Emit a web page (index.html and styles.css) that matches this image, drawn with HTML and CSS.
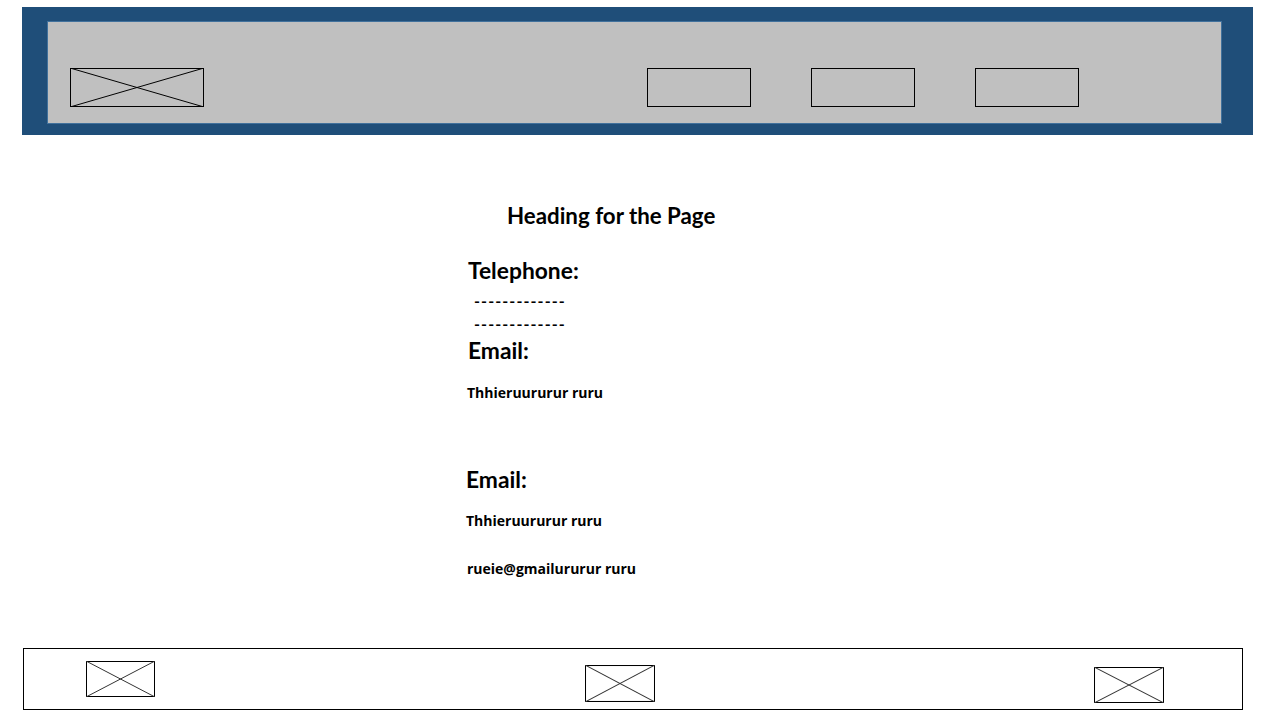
FILE: index.html
```html
<!DOCTYPE html>
<html lang="en">
<head>
<meta charset="utf-8">
<title>Contact</title>
<link rel="stylesheet" href="styles.css">
</head>
<body>
<header class="header">
  <div class="header-inner">
    <svg class="ph logo" viewBox="0 0 134 39" preserveAspectRatio="none"><rect x="0.5" y="0.5" width="133" height="38" fill="none" stroke="#000"/><line x1="0" y1="0" x2="134" y2="39" stroke="#000"/><line x1="0" y1="39" x2="134" y2="0" stroke="#000"/></svg>
    <nav class="nav">
      <div class="nav-box"></div>
      <div class="nav-box"></div>
      <div class="nav-box"></div>
    </nav>
  </div>
</header>
<main class="main">
  <h1 class="title">Heading for the Page</h1>
  <div class="content">
    <h2 class="label label-tel">Telephone:</h2>
    <p class="dash d1">-------------</p>
    <p class="dash">-------------</p>
    <h2 class="label label-email">Email:</h2>
    <p class="small s1">Thhieruururur ruru</p>
    <h2 class="label label-email2">Email:</h2>
    <p class="small s2">Thhieruururur ruru</p>
    <p class="small s3">rueie@gmailururur ruru</p>
  </div>
</main>
<footer class="footer">
  <svg class="ph f1" viewBox="0 0 69 36" preserveAspectRatio="none"><rect x="0.5" y="0.5" width="68" height="35" fill="none" stroke="#000"/><line x1="0" y1="0" x2="69" y2="36" stroke="#333"/><line x1="0" y1="36" x2="69" y2="0" stroke="#333"/></svg>
  <svg class="ph f2" viewBox="0 0 69 36" preserveAspectRatio="none"><rect x="0.5" y="0.5" width="68" height="35" fill="none" stroke="#000"/><line x1="0" y1="0" x2="69" y2="36" stroke="#333"/><line x1="0" y1="36" x2="69" y2="0" stroke="#333"/></svg>
  <svg class="ph f3" viewBox="0 0 69 36" preserveAspectRatio="none"><rect x="0.5" y="0.5" width="68" height="35" fill="none" stroke="#000"/><line x1="0" y1="0" x2="69" y2="36" stroke="#333"/><line x1="0" y1="36" x2="69" y2="0" stroke="#333"/></svg>
</footer>
</body>
</html>
```
FILE: styles.css
```css
html, body {
  margin: 0;
  padding: 0;
  background: #fff;
}
body {
  width: 1280px;
  height: 720px;
  overflow: hidden;
  font-family: "Lato", "Open Sans", sans-serif;
  color: #000;
}
.header {
  box-sizing: border-box;
  margin: 7px 0 0 22px;
  width: 1231px;
  height: 128px;
  background: #1f4e79;
  padding: 14px 31px 11px 25px;
}
.header-inner {
  box-sizing: border-box;
  height: 103px;
  border: 1px solid #41719c;
  background: #c0c0c0;
  display: flex;
  align-items: flex-start;
  padding: 46px 0 0 22px;
}
.ph {
  display: block;
  flex: none;
}
.logo {
  width: 134px;
  height: 39px;
}
.nav {
  display: flex;
  gap: 60px;
  margin-left: 443px;
}
.nav-box {
  box-sizing: border-box;
  width: 104px;
  height: 39px;
  border: 1px solid #000;
}
.main {
  height: 513px;
  box-sizing: border-box;
  padding-top: 66px;
}
.title {
  margin: 0 0 0 507px;
  font-size: 22.3px;
  font-weight: 700;
  line-height: 30px;
}
.content {
  padding-left: 468px;
}
.label {
  margin: 0;
  font-size: 22.8px;
  font-weight: 700;
  line-height: 24px;
}
.label-tel {
  margin-top: 27px;
}
.dash {
  margin: 0 0 0 6px;
  font-size: 16px;
  font-weight: 700;
  line-height: 23px;
  letter-spacing: 1.1px;
}
.d1 {
  margin-top: 7px;
}
.label-email {
  margin-top: 3px;
}
.small {
  margin: 0;
  font-family: "Open Sans", "Lato", sans-serif;
  font-size: 14px;
  font-weight: 700;
  line-height: 18px;
}
.s1 {
  margin-top: 22px;
  margin-left: -1px;
}
.label-email2 {
  margin-top: 65px;
  margin-left: -2px;
}
.s2 {
  margin-top: 21px;
  margin-left: -2px;
}
.s3 {
  margin-top: 30px;
  margin-left: -1px;
}
.footer {
  box-sizing: border-box;
  margin-left: 23px;
  width: 1220px;
  height: 62px;
  border: 1px solid #000;
  display: flex;
  align-items: flex-start;
  padding-left: 62px;
}
.f1 { width: 69px; height: 36px; margin-top: 12px; }
.f2 { width: 70px; height: 37px; margin-top: 16px; margin-left: 430px; }
.f3 { width: 70px; height: 36px; margin-top: 18px; margin-left: 439px; }
```
